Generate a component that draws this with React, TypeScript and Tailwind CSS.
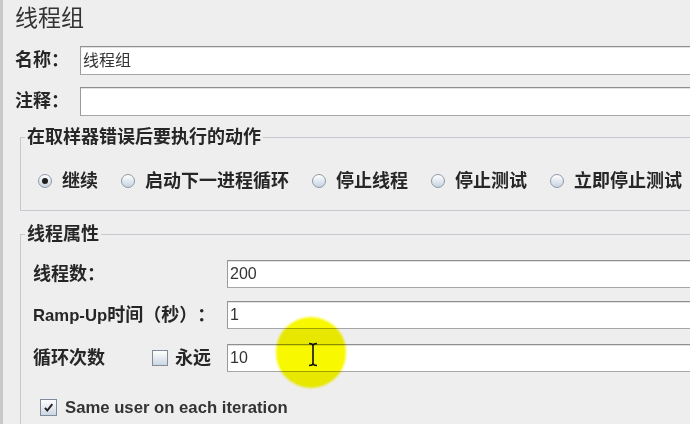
import React from "react";

function Radio({ checked }: { checked?: boolean }) {
  return (
    <span className="flex h-[14px] w-[14px] shrink-0 items-center justify-center rounded-full border border-[#8d99a6] bg-linear-to-b from-white to-[#c6d3e1]">
      {checked && <span className="h-[6px] w-[6px] rounded-full bg-[#1e1e1e]" />}
    </span>
  );
}

function Check({ checked, size }: { checked?: boolean; size: string }) {
  return (
    <span
      className={
        "flex shrink-0 items-center justify-center border border-[#7f8b98] bg-linear-to-b from-white to-[#ccd7e3] " +
        size
      }
    >
      {checked && (
        <svg width="11" height="11" viewBox="0 0 11 11">
          <path d="M2 5.8 L4.3 8.6 L9.3 2.2" stroke="#1e1e1e" strokeWidth="1.9" fill="none" />
        </svg>
      )}
    </span>
  );
}

function Field({ value, className }: { value?: string; className?: string }) {
  return (
    <div
      className={
        "flex h-full flex-1 items-center border-y border-l border-t-[#8f8f8f] border-b-[#a6a6a6] border-l-[#9a9a9a] bg-white pl-[2px] shadow-[inset_0_1px_0_#e2e2e2] " +
        (className ?? "")
      }
    >
      {value}
    </div>
  );
}

export default function App() {
  return (
    <div className="relative h-[424px] w-[690px] overflow-hidden border-l-[3px] border-[#c9c9c9] bg-[#eeeeee] font-['Liberation_Sans','Noto_Sans_CJK_SC',sans-serif] text-[#262626] [text-spacing-trim:space-all]">
      <div className="w-[730px] pl-[12px]">
        <div className="h-[46px] pt-[3px] text-[23px] leading-[30px] text-[#333333]">线程组</div>

        <div className="flex h-[29px] items-center">
          <div className="w-[65px] text-[18px] font-bold">名称：</div>
          <Field value="线程组" className="text-[16px] text-[#333333]" />
        </div>
        <div className="mt-[12px] flex h-[29px] items-center">
          <div className="w-[65px] text-[18px] font-bold">注释：</div>
          <Field />
        </div>

        <fieldset className="mt-[12px] ml-[5px] border border-[#c4c9d0] pb-[19px]">
          <legend className="ml-[4px] px-[2px] text-[18px] leading-[18px] font-bold">在取样器错误后要执行的动作</legend>
          <div className="mt-[25px] flex h-[20px] items-center gap-[23px] pl-[17px] text-[18px] font-bold">
            <div className="flex items-center gap-[10px]">
              <Radio checked />
              <span>继续</span>
            </div>
            <div className="flex items-center gap-[10px]">
              <Radio />
              <span>启动下一进程循环</span>
            </div>
            <div className="flex items-center gap-[10px]">
              <Radio />
              <span>停止线程</span>
            </div>
            <div className="flex items-center gap-[10px]">
              <Radio />
              <span>停止测试</span>
            </div>
            <div className="flex items-center gap-[10px]">
              <Radio />
              <span>立即停止测试</span>
            </div>
          </div>
        </fieldset>

        <fieldset className="mt-[14px] ml-[5px] border border-[#c4c9d0] pb-[40px]">
          <legend className="ml-[4px] px-[2px] text-[18px] leading-[18px] font-bold">线程属性</legend>
          <div className="pl-[12px]">
            <div className="mt-[17px] flex h-[28px] items-center">
              <div className="w-[194px] text-[18px] font-bold">线程数：</div>
              <Field value="200" className="text-[16px] text-[#333333]" />
            </div>
            <div className="mt-[13px] flex h-[28px] items-center">
              <div className="w-[194px] text-[18px] font-bold">
                <span className="text-[16.7px]">Ramp-Up</span>时间（秒）：
              </div>
              <Field value="1" className="text-[16px] text-[#333333]" />
            </div>
            <div className="mt-[15px] flex h-[28px] items-center">
              <div className="flex w-[194px] items-center text-[18px] font-bold">
                <span className="w-[119px]">循环次数</span>
                <Check size="h-[16px] w-[16px]" />
                <span className="ml-[7px]">永远</span>
              </div>
              <Field value="10" className="text-[16px] text-[#333333]" />
            </div>
            <div className="mt-[23px] flex items-center gap-[8px] pl-[7px]">
              <Check checked size="h-[17px] w-[17px]" />
              <span className="text-[16.7px] font-bold text-[#333333]">Same user on each iteration</span>
            </div>
          </div>
        </fieldset>
      </div>

      <div className="pointer-events-none absolute top-[317px] left-[273px] h-[71px] w-[70px] rounded-full bg-[#f8f800] mix-blend-multiply blur-[0.8px]" />
      <svg className="pointer-events-none absolute top-[342px] left-[304px]" width="12" height="25" viewBox="0 0 12 25">
        <path d="M2 1.5 Q6 1.5 6 4 Q6 1.5 10 1.5 M6 4 V21 M2 23.5 Q6 23.5 6 21 Q6 23.5 10 23.5" stroke="#111" strokeWidth="1.6" fill="none" />
      </svg>
    </div>
  );
}
